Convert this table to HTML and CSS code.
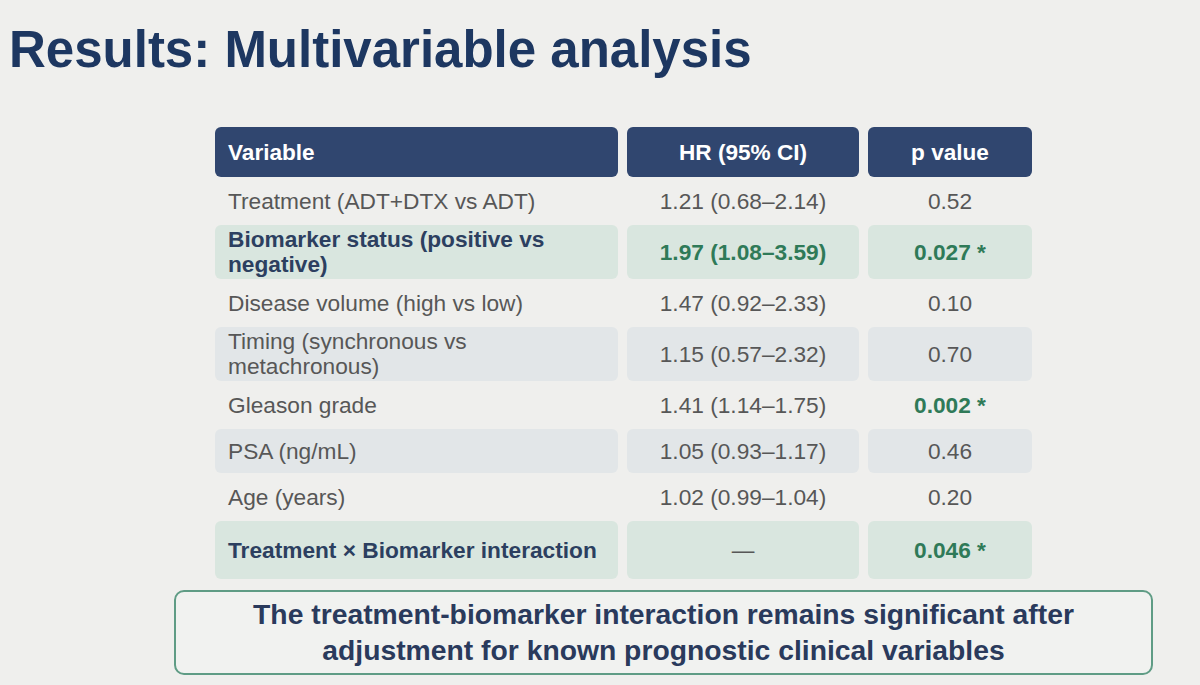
FILE: index.html
```html
<!DOCTYPE html>
<html lang="en">
<head>
<meta charset="utf-8">
<title>Results: Multivariable analysis</title>
<link rel="stylesheet" href="styles.css">
</head>
<body>
<div class="slide">
  <h1 class="title">Results: Multivariable analysis</h1>

  <div class="table">
    <div class="row head">
      <div class="cell left">Variable</div>
      <div class="cell mid">HR (95% CI)</div>
      <div class="cell mid">p value</div>
    </div>
    <div class="row">
      <div class="cell left">Treatment (ADT+DTX vs ADT)</div>
      <div class="cell mid">1.21 (0.68–2.14)</div>
      <div class="cell mid">0.52</div>
    </div>
    <div class="row green double">
      <div class="cell left strong">Biomarker status (positive vs negative)</div>
      <div class="cell mid sig">1.97 (1.08–3.59)</div>
      <div class="cell mid sig">0.027 *</div>
    </div>
    <div class="row">
      <div class="cell left">Disease volume (high vs low)</div>
      <div class="cell mid">1.47 (0.92–2.33)</div>
      <div class="cell mid">0.10</div>
    </div>
    <div class="row grey double">
      <div class="cell left">Timing (synchronous vs metachronous)</div>
      <div class="cell mid">1.15 (0.57–2.32)</div>
      <div class="cell mid">0.70</div>
    </div>
    <div class="row">
      <div class="cell left">Gleason grade</div>
      <div class="cell mid">1.41 (1.14–1.75)</div>
      <div class="cell mid sig">0.002 *</div>
    </div>
    <div class="row grey">
      <div class="cell left">PSA (ng/mL)</div>
      <div class="cell mid">1.05 (0.93–1.17)</div>
      <div class="cell mid">0.46</div>
    </div>
    <div class="row">
      <div class="cell left">Age (years)</div>
      <div class="cell mid">1.02 (0.99–1.04)</div>
      <div class="cell mid">0.20</div>
    </div>
    <div class="row green tall">
      <div class="cell left strong">Treatment × Biomarker interaction</div>
      <div class="cell mid">—</div>
      <div class="cell mid sig">0.046 *</div>
    </div>
  </div>

  <div class="note">The treatment-biomarker interaction remains significant after<br>adjustment for known prognostic clinical variables</div>
</div>
</body>
</html>
```

FILE: styles.css
```css
html, body {
  margin: 0;
  padding: 0;
}
body {
  background: #efefed;
  font-family: "Liberation Sans", Arial, sans-serif;
  width: 1200px;
  height: 685px;
  overflow: hidden;
}
.slide {
  padding-top: 25px;
}
.title {
  margin: 0 0 52px 9px;
  font-size: 51px;
  line-height: 50px;
  font-weight: 700;
  color: #1d3761;
}
.table {
  margin-left: 215px;
  width: 817px;
  display: flex;
  flex-direction: column;
  gap: 2px;
}
.row {
  display: grid;
  grid-template-columns: 403px 232px 164px;
  column-gap: 9px;
  min-height: 44px;
}
.row.double { min-height: 54px; }
.row.tall { min-height: 58px; }
.row.head { min-height: 50px; }
.cell {
  display: flex;
  align-items: center;
  padding: 2px 13px;
  font-size: 22.7px;
  line-height: 25px;
  color: #575757;
  border-radius: 6px;
}
.cell.mid {
  justify-content: center;
  text-align: center;
}
.head .cell {
  background: #30466f;
  color: #ffffff;
  font-weight: 700;
  font-size: 22.6px;
}
.green .cell { background: #d9e6df; }
.grey .cell { background: #e2e6e8; }
.strong {
  font-weight: 700;
  color: #2c3f60;
}
.sig {
  font-weight: 700;
  color: #2f7a58;
}
.note {
  margin: 11px 0 0 174px;
  width: 979px;
  box-sizing: border-box;
  height: 85px;
  border: 2px solid #5f9c85;
  border-radius: 10px;
  background: #f1f2f0;
  padding: 4px 0;
  text-align: center;
  font-size: 28.3px;
  line-height: 36px;
  font-weight: 700;
  color: #2a3a5c;
}
```
